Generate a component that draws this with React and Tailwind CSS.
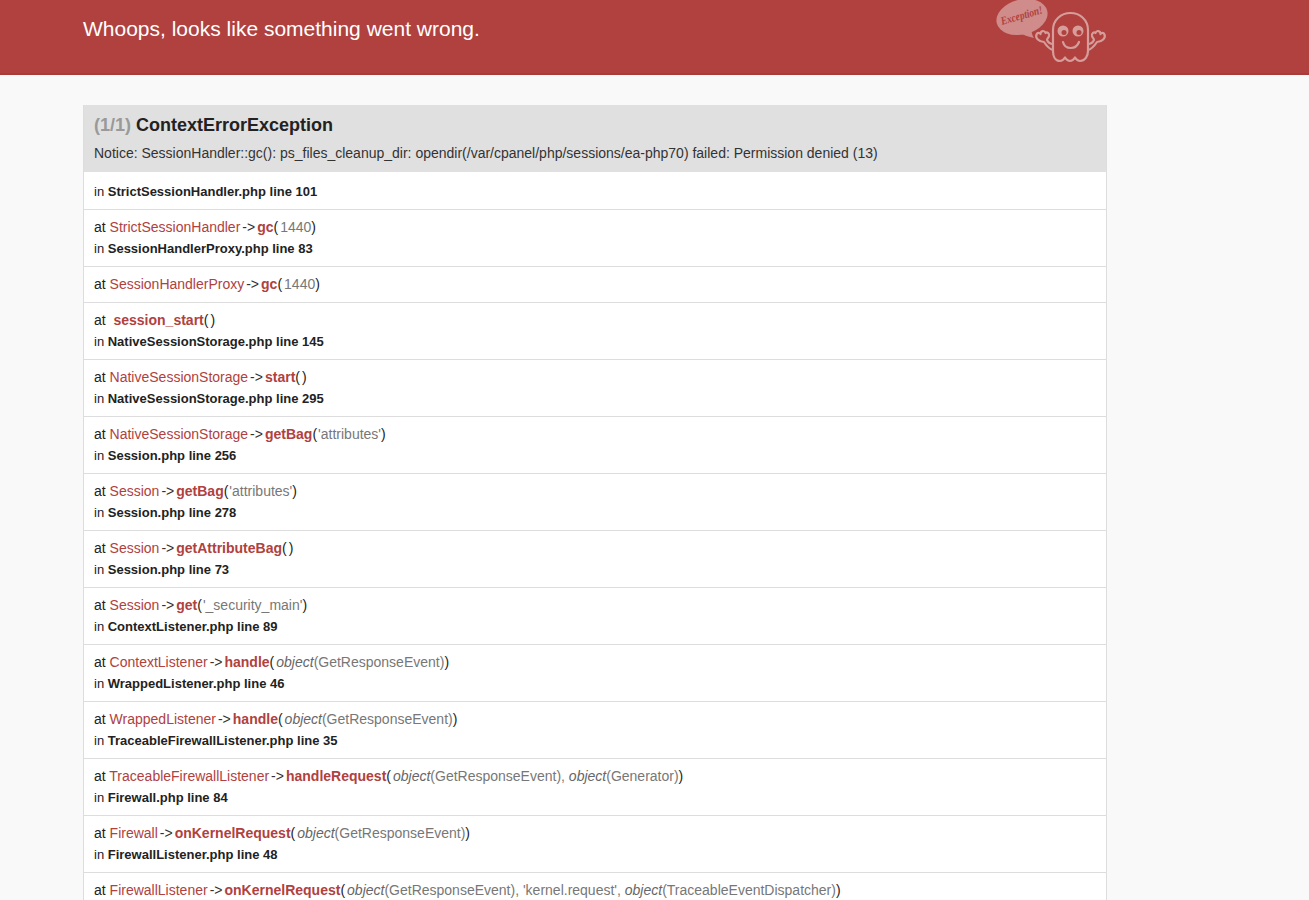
const A = ({ c }) => <span className="text-[#777]">{c}</span>;
const O = ({ t }) => (<><em className="text-[#666]">object</em><A c={`(${t})`} /></>);

const rows = [
  { cls: "StrictSessionHandler", m: "gc", args: <A c="1440" />, file: "SessionHandlerProxy.php line 83" },
  { cls: "SessionHandlerProxy", m: "gc", args: <A c="1440" /> },
  { fn: "session_start", gap: true, file: "NativeSessionStorage.php line 145" },
  { cls: "NativeSessionStorage", m: "start", gap: true, file: "NativeSessionStorage.php line 295" },
  { cls: "NativeSessionStorage", m: "getBag", args: <A c="'attributes'" />, tight: true, file: "Session.php line 256" },
  { cls: "Session", m: "getBag", args: <A c="'attributes'" />, tight: true, file: "Session.php line 278" },
  { cls: "Session", m: "getAttributeBag", gap: true, file: "Session.php line 73" },
  { cls: "Session", m: "get", args: <A c="'_security_main'" />, tight: true, file: "ContextListener.php line 89" },
  { cls: "ContextListener", m: "handle", args: <O t="GetResponseEvent" />, file: "WrappedListener.php line 46" },
  { cls: "WrappedListener", m: "handle", args: <O t="GetResponseEvent" />, file: "TraceableFirewallListener.php line 35" },
  { cls: "TraceableFirewallListener", m: "handleRequest", args: <><O t="GetResponseEvent" /><A c=", " /><O t="Generator" /></>, file: "Firewall.php line 84" },
  { cls: "Firewall", m: "onKernelRequest", args: <O t="GetResponseEvent" />, file: "FirewallListener.php line 48" },
  { cls: "FirewallListener", m: "onKernelRequest", args: <><O t="GetResponseEvent" /><A c=", 'kernel.request', " /><O t="TraceableEventDispatcher" /></>, file: "TraceableEventDispatcher.php line 150" },
];

const hand = "M58 50C54 49 51 45 49 42C44 42 40 38 41.5 34.5C42.5 32.5 44.5 32.5 45.5 34C45.5 30.5 49.5 30 50.5 33C52 31.5 54.5 33 54 36C53.5 38 52 38.5 52 40C53 42 55 44 58 44";

function Ghost() {
  return (
    <svg width="112" height="66" viewBox="0 0 112 66" className="block">
      <ellipse cx="27" cy="17" rx="26" ry="17.5" transform="rotate(-14 27 17)" fill="#cf8c8a" />
      <path d="M22 31C28 35 34 37 39 38C37 35 36 32 37 27Z" fill="#cf8c8a" />
      <text x="0" y="0" transform="translate(7 25) rotate(-16)" fontFamily="'Liberation Serif', serif" fontStyle="italic" fontWeight="700" fontSize="11.5" textLength="43" lengthAdjust="spacingAndGlyphs" fill="#b0413e">Exception!</text>
      <g fill="none" stroke="#d69d9b" strokeWidth="2.2" strokeLinecap="round" strokeLinejoin="round">
        <path d="M58 51V30C58 20 66 13 75.5 13S93 20 93 30V51C93 56 90 61 85 61C83 61 81.5 60 80 57.5C78.5 60 77 61 75 61C73 61 71.5 60 70 57.5C68.5 60 67 61 65 61C60 61 58 56 58 51Z" />
        <path d={hand} />
        <path d={hand} transform="translate(151 0) scale(-1 1)" />
        <path d="M68 42C70 50 81 50 84 42" />
      </g>
      <circle cx="68" cy="31" r="5.5" fill="#d69d9b" />
      <circle cx="83" cy="31" r="5.5" fill="#d69d9b" />
      <circle cx="69" cy="32.5" r="2.5" fill="#b0413e" />
      <circle cx="84" cy="32.5" r="2.5" fill="#b0413e" />
    </svg>
  );
}

function InLine({ file }) {
  return (
    <div className="text-[13px] leading-[21px] text-[#222]">
      in <strong className="font-bold">{file}</strong>
    </div>
  );
}

export default function App() {
  return (
    <div className="h-[900px] overflow-hidden bg-[#f9f9f9] font-['Liberation_Sans',Arial,sans-serif] text-[14px] text-[#222]">
      <header className="h-[75px] bg-[#b0413e] border-b-2 border-[#a83c39]">
        <div className="ml-[83px] flex w-[1024px] items-start justify-between">
          <h1 className="pt-[16px] text-[21px] leading-[26px] font-normal text-white">Whoops, looks like something went wrong.</h1>
          <Ghost />
        </div>
      </header>
      <main className="ml-[83px] mt-[30px] w-[1024px] border-x border-[#ddd]">
        <div className="h-[67px] bg-[#e0e0e0] pl-[10px] pt-[9px]">
          <h2 className="text-[18px] leading-[22px] font-bold text-[#222]">
            <span className="text-[#999]">(1/1)</span> ContextErrorException
          </h2>
          <p className="mt-[7px] text-[14px] leading-[20px] text-[#333]">
            Notice: SessionHandler::gc(): ps_files_cleanup_dir: opendir(/var/cpanel/php/sessions/ea-php70) failed: Permission denied (13)
          </p>
        </div>
        <ul className="bg-white">
          <li className="border-b border-[#ddd] px-[10px] pt-[9px] pb-[7px]">
            <InLine file="StrictSessionHandler.php line 101" />
          </li>
          {rows.map((r, i) => (
            <li key={i} className="border-b border-[#ddd] px-[10px] pt-[7px] pb-[7px]">
              <div className="text-[14px] leading-[21px] whitespace-nowrap">
                at{" "}
                {r.fn ? (
                  <>{"\u00a0"}<strong className="font-bold text-[#b0413e]">{r.fn}</strong></>
                ) : (
                  <>
                    <span className="text-[#b0413e]">{r.cls}</span>
                    <span className="mx-[2px] text-[#333]">-&gt;</span>
                    <strong className="font-bold text-[#b0413e]">{r.m}</strong>
                  </>
                )}
                <span>(</span>
                <span className={r.tight ? "ml-[1px]" : "ml-[2px]"}>{r.args}</span>
                <span>)</span>
              </div>
              {r.file && <InLine file={r.file} />}
            </li>
          ))}
        </ul>
      </main>
    </div>
  );
}
